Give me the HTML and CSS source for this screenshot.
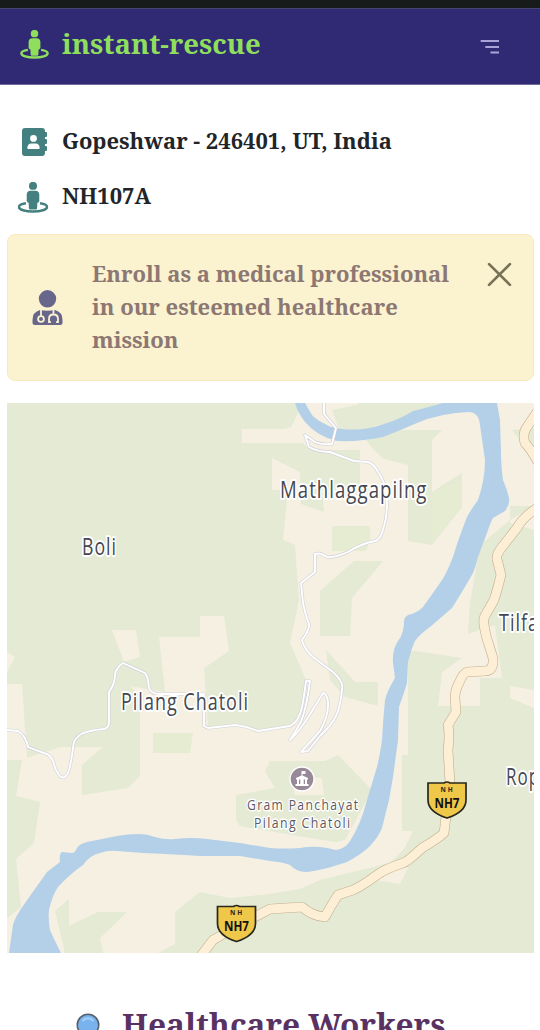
FILE: index.html
```html
<!DOCTYPE html>
<html lang="en">
<head>
<meta charset="utf-8">
<title>instant-rescue</title>
<link rel="stylesheet" href="styles.css">
</head>
<body>
<svg width="0" height="0" class="defs" aria-hidden="true">
  <symbol id="street" viewBox="0 0 512 512">
    <circle cx="256" cy="64" r="66"/>
    <path d="M298 144h-84c-35 0-62 27-62 62v104c0 16 12 30 32 34l4 88c2 13 12 24 28 24h80c16 0 26-11 28-24l4-88c20-4 32-18 32-34V206c0-35-27-62-62-62z"/>
    <path d="M140 352C70 362 24 383 24 411c0 45 104 75 232 75s232-30 232-75c0-28-46-49-116-59" fill="none" stroke="currentColor" stroke-width="42"/>
  </symbol>
</svg>
<div class="status"></div>
<header class="navbar">
  <svg class="brand-icon" viewBox="0 0 512 512"><use href="#street"/></svg>
  <span class="brand">instant-rescue</span>
  <svg class="menu" width="20" height="16" viewBox="0 0 20 16"><path d="M.7 2H19M5.300 8H19M10.500 13.500H19" stroke="#aaa3d6" stroke-width="2.200"/></svg>
</header>
<main>
  <section class="place">
    <div class="row">
      <svg class="book" viewBox="0 0 25 28"><path fill-rule="evenodd" d="M3 0H20Q23 0 23 3V4H24Q25 4 25 5V8Q25 9 24 9H23V11H24Q25 11 25 12V15Q25 16 24 16H23V18H24Q25 18 25 19V22Q25 23 24 23H23V25Q23 28 20 28H3Q0 28 0 25V3Q0 0 3 0ZM11.500 7A3.400 3.400 0 1 0 11.500 13.800A3.400 3.400 0 1 0 11.500 7ZM9.500 15.500Q5.500 15.500 5.300 20Q5.300 21 6.300 21H16.700Q17.700 21 17.700 20Q17.500 15.500 13.500 15.500Z"/></svg>
      <span>Gopeshwar - 246401, UT, India</span>
    </div>
    <div class="row">
      <svg class="person" viewBox="0 0 512 512"><use href="#street"/></svg>
      <span>NH107A</span>
    </div>
  </section>
  <section class="notice">
    <svg class="doctor" viewBox="0 0 31 35">
      <circle cx="15.500" cy="8.800" r="8.700"/>
      <path d="M8 20Q0.500 22 0.500 30V32.500Q0.500 35 3 35H28Q30.500 35 30.500 32.500V30Q30.500 22 23 20Q15.500 21.500 8 20Z"/>
      <g fill="none" stroke="#fbf2cf" stroke-width="1.800"><path d="M9 19V26M21.500 19V24.500M18.800 32H17V29Q17 24.500 21.500 24.500Q26 24.500 26 29V32H24.200"/><circle cx="9" cy="29" r="2.900"/></g>
    </svg>
    <p>Enroll as a medical professional<br>in our esteemed healthcare<br>mission</p>
    <svg class="close" viewBox="0 0 24 24"><path d="M2 2L22 22M22 2L2 22" stroke="#777257" stroke-width="2.600" stroke-linecap="round"/></svg>
  </section>
  <svg class="map" viewBox="7 403 527 549.500">
    <path fill="#f5f0e2" d="M7 403h527v550H7z"/>
    <g fill="#e4ead4">
      <path d="M7 403H303L291 427L284 429H242V443H303L310 450H360V490H322L324 512L301 504L300 472L272 458V490H288L283 540L295 545L299 600L290 643L306 680L300 718L290 727L258 731L235 725L208 727L204 668L229 651L224 616H200V637H159L165 692L130 686L145 700H140V776L128 788L82 795V765L103 747H60L27 758L22 684H7Z"/>
      <path d="M7 760H22L16 796L40 802L34 843L16 859L21 907L7 918Z"/>
      <path d="M332 410L365 403H420L370 428L340 432Z"/>
      <path d="M358 403H455L410 422L366 426Z"/>
      <path d="M366 440L400 430H442L432 440V492L462 473V507L432 545L408 541V465L384 459L374 450Z"/>
      <path d="M354 561H383L352 598L350 636H320V591Z"/>
      <path d="M326 650L355 682H378V706L345 697L330 680Z"/>
      <path d="M534 506H510V523L534 530V953H158L175 944V912L200 892L230 898L270 894L300 889L320 880L390 863L404 849L413 831H402V755H408V652L415 651L462 658L442 672L438 706H480V678H502L495 625L468 634L470 603L480 545L510 520Z"/>
      <path d="M534 428L512 430L526 448H534Z"/>
      <path d="M270 761H325L338 755L372 790L345 840L336 842L298 836L240 826L236 820V795L275 788L265 771Z"/>
      <path d="M55 911L69 899V926L98 912H127L100 938L103 953H65Z"/>
    </g>
    <path fill="#f5f0e2" d="M112 630H136L140 657L124 662ZM7 652L15 657L7 672ZM510 686L534 690V708L510 698ZM393 870L404 861L408 868L400 884L375 880ZM290 776L322 778L324 795H295Z"/>
    <path fill="#e6ecd2" d="M332 526H370V540L366 551H332ZM153 733H193L190 753H153ZM432 492L462 480V507L432 543Z"/>
    <path fill="#b3d0e8" d="M295 403Q298 413 305 422Q318 437 337 441Q360 442 383 437Q401 430 417 423Q440 413 470 412Q479 413 480 425L485 460Q485 480 478 500Q470 511 467 517Q458 540 453 557Q446 575 440 583L423 607Q417 613 408 615Q403 618 404 624Q403 635 398 641Q392 650 393 663L395 678Q387 691 385 700Q383 720 382 740Q380 755 377 767L367 800Q361 824 350 841Q345 849 336 850Q329 848 320 847Q310 846 300 848Q285 849 270 848L240 843L207 839Q192 837 175 839Q165 840 155 837Q147 834 140 834Q127 834 117 836L87 842Q79 844 77 848Q75 853 72 853L62 852Q59 853 60 862L47 872L25 903Q15 917 13 925L9 953H61Q52 935 50 930Q48 920 49 910Q52 896 58 887Q70 874 83 865Q90 855 100 853Q108 850 117 851Q130 852 143 853Q168 854 200 856L240 856L270 861Q283 862 290 865Q297 872 305 872Q320 871 347 862Q362 854 370 846Q379 836 382 828L389 800L393 777L398 740L399 707Q405 690 407 683L408 662Q412 647 415 641Q420 634 430 627L452 608Q464 589 473 573Q476 566 478 557L487 533Q491 521 493 518L505 511Q510 505 509 498Q507 489 503 480Q501 465 501 453L500 420L497 403H443Q425 408 413 411Q400 419 387 423Q372 428 363 429Q350 430 343 429Q332 428 327 425Q315 419 312 415L305 403Z"/>
    <g class="trail">
      <path id="trail" d="M324 403V414L336 428L332 444Q322 445 315 442L305 435L309 447Q318 452 330 452L354 461L368 462Q374 464 378 472Q385 482 386 492Q389 512 383 530Q380 540 375 541Q360 544 348 552Q334 558 327 557Q320 552 315 554V572L301 583L303 603Q306 617 309 624Q310 629 302 640Q304 649 313 657L333 672Q344 682 342 689Q341 703 337 714Q332 725 320 736L308 751L301 752L320 731Q329 715 328 702Q327 694 323 693L309 716Q298 733 290 740L301 722Q307 706 310 681H306Q304 697 302 707Q299 722 290 726L258 731Q246 726 235 725L208 728L204 726V694H160Q151 694 149 688Q148 676 145 673L123 663Q117 667 115 674Q115 684 109 692V722Q109 728 104 729Q92 730 83 733Q73 738 73 748Q71 765 68 773Q64 780 60 776Q55 770 54 764Q52 755 44 753Q35 750 28 747Q26 736 18 731L7 730"/>
      <use href="#trail" class="trail-fill"/>
    </g>
    <g class="highway">
      <path id="nh" d="M537 508Q522 518 517 528L502 547Q496 555 497 559L501 575Q497 591 494 600L486 614Q483 618 484 625Q486 637 488 642L493 658Q494 670 486 671L467 672Q463 673 459 683Q455 690 455 698L456 712L448 725Q450 735 448 750L450 783L444 833Q436 840 422 848Q407 862 403 863Q385 869 377 875Q362 886 353 890L338 895Q332 904 325 917Q312 916 302 907L270 909L245 922L213 940L200 957M537 412L527 427Q522 434 525 443Q530 448 538 462"/>
      <use href="#nh" class="highway-fill"/>
    </g>
    <g class="town">
      <text x="280" y="497.500" textLength="147.500" lengthAdjust="spacingAndGlyphs">Mathlaggapilng</text>
      <text x="82" y="554.500" textLength="35" lengthAdjust="spacingAndGlyphs">Boli</text>
      <text x="121" y="709.500" textLength="128" lengthAdjust="spacingAndGlyphs">Pilang Chatoli</text>
      <text x="499" y="630.500" textLength="40" lengthAdjust="spacingAndGlyphs">Tilfa</text>
      <text x="506" y="784.500" textLength="34" lengthAdjust="spacingAndGlyphs">Rop</text>
    </g>
    <g class="poi">
      <text x="247" y="809.500" textLength="112.500" lengthAdjust="spacingAndGlyphs">Gram Panchayat</text>
      <text x="254" y="827.500" textLength="97.500" lengthAdjust="spacingAndGlyphs">Pilang Chatoli</text>
    </g>
    <circle cx="302" cy="779" r="12" fill="#978997" stroke="#fff" stroke-width="1.400"/>
    <path fill="#fff" d="M301.500 771H305.500V774H302.500V775.500L308 778V779.500H307V784H308.500V786H295.500V784H297V779.500H296V778L301.500 775.500ZM299 779.500V784H300.300V779.500ZM303.700 779.500V784H305V779.500Z"/>
    <g id="shield">
      <path d="M428 783H444Q447 781 450 783H466V800Q466 812 447 818Q428 812 428 800Z" fill="#efc84a" stroke="#29271d" stroke-width="1.700"/>
      <text class="nh-small" x="440.500" y="791.500" textLength="14" lengthAdjust="spacingAndGlyphs">NH</text>
      <text class="nh-big" x="434.500" y="807.500" textLength="25" lengthAdjust="spacingAndGlyphs">NH7</text>
    </g>
    <use href="#shield" x="-210.500" y="123.500"/>
  </svg>
  <section class="workers">
    <svg class="lens" viewBox="0 0 24 34"><path d="M12 20V34" stroke="#505b66" stroke-width="4"/><circle cx="12" cy="12" r="10.700" fill="#78b3ee" stroke="#56616c" stroke-width="1.600"/><path d="M6.500 8Q12 2.500 17.500 8" fill="none" stroke="#a9d2fa" stroke-width="1.800"/></svg>
    <h2>Healthcare Workers</h2>
  </section>
</main>
</body>
</html>
```
FILE: styles.css
```css
* { box-sizing: border-box; }
body {
  margin: 0;
  height: 1030px;
  overflow: hidden;
  background: #fff;
  color: #212529;
  font-family: "Noto Serif", "DejaVu Serif Condensed", "DejaVu Serif", serif;
  font-stretch: condensed;
  font-weight: 700;
  font-size: 22px;
  white-space: nowrap;
}
svg { display: block; flex: none; fill: currentColor; }
.defs { display: none; }
.status { height: 8px; background: #171c1b; }
.navbar {
  height: 77px;
  display: flex;
  align-items: center;
  padding: 0 40px 4px 20px;
  background: #302a75;
  border-top: 1px solid #45436f;
  border-bottom: 1px solid #6f6a9c;
  color: #8fdf5c;
}
.brand-icon { width: 29px; height: 29px; margin: 0 13px 0 0; }
.brand { font-size: 27.5px; line-height: 34px; margin-bottom: 2px; }
.menu { margin: 5px 0 0 auto; }
main { padding: 0 6px 0 7px; }
.place { padding: 29px 0 0 10px; height: 149px; }
.row { display: flex; align-items: center; height: 55px; }
.row svg { color: #448080; }
.row span { margin-bottom: 3px; font-size: 21.95px; }
.book { width: 25px; height: 28px; margin: 1px 15px 0 5px; }
.person { width: 32px; height: 31px; margin: 2px 13px 0 0; }
.notice {
  height: 147px;
  display: flex;
  padding: 22px 21px 0 24px;
  background: #fbf2cf;
  border: 1px solid #f8eabc;
  border-radius: 8px;
  color: #8c7773;
}
.notice p { margin: 0; line-height: 33px; }
.doctor { width: 31px; height: 35px; margin: 33px 29px 0 0; color: #69668b; }
.close { width: 25px; height: 25px; margin: 5px 0 0 auto; }
.map { width: 527px; height: 549.5px; margin-top: 22px; }
.trail { fill: none; stroke: #d2d1d9; stroke-width: 3.2; stroke-linejoin: round; }
.trail-fill { stroke: #fff; stroke-width: 1.9; }
.highway { fill: none; stroke: #c6b08e; stroke-width: 10; stroke-linejoin: round; }
.highway-fill { stroke: #fcefd6; stroke-width: 8.8; }
.map text { font-family: "Open Sans", "Noto Sans", sans-serif; font-stretch: normal; font-weight: 400; }
.town text { font-size: 23px; letter-spacing: 1.3px; fill: #45474f; stroke: #fff; stroke-width: 4; stroke-linejoin: round; paint-order: stroke; }
.poi text { font-size: 15px; letter-spacing: 1.7px; fill: #5e5863; stroke: #fff; stroke-width: 3; stroke-linejoin: round; paint-order: stroke; }
.map .nh-small { font-size: 7px; letter-spacing: 2px; font-weight: 700; fill: #29271d; }
.map .nh-big { font-size: 13.5px; font-weight: 700; fill: #111; }
.workers { display: flex; padding: 59px 0 0 69px; }
.lens { width: 24px; height: 34px; margin: 1px 22px 0 0; }
h2 { margin: -8px 0 0; font-size: 31.6px; line-height: 40px; color: #593263; }
```
